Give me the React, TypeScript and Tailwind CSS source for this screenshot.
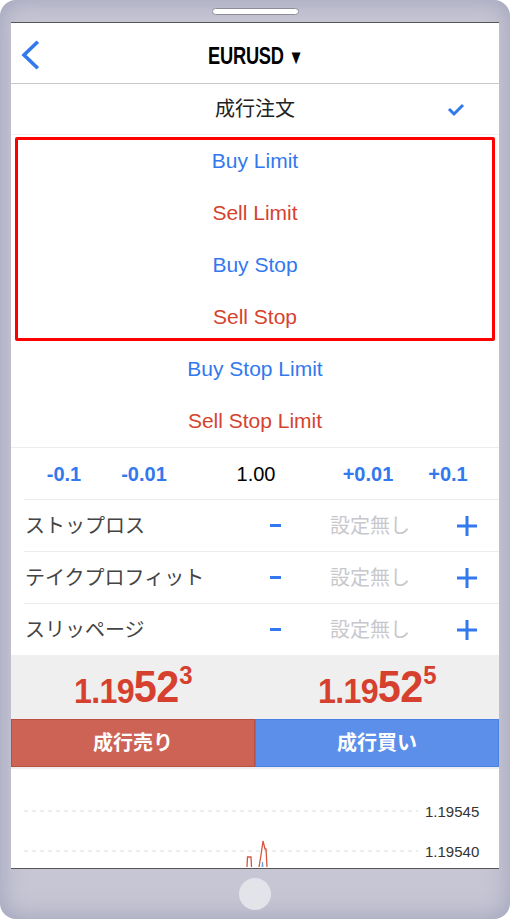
import React from 'react'

const BLUE = 'text-[#3278ee]'
const RED = 'text-[#d5432f]'

const orderTypes = [
  { label: 'Buy Limit', color: BLUE },
  { label: 'Sell Limit', color: RED },
  { label: 'Buy Stop', color: BLUE },
  { label: 'Sell Stop', color: RED },
]

const stopRows = ['ストップロス', 'テイクプロフィット', 'スリッページ']

function Price({ big, sup }: { big: string; sup: string }) {
  return (
    <div className="flex-1 flex justify-center items-end pb-[10px]">
      <span className="inline-flex items-start scale-x-[0.92] text-[#d5412e] font-bold tracking-[-0.8px] leading-none">
        <span className="text-[35px] mt-[9px]">1.19</span>
        <span className="text-[45px]">{big}</span>
        <span className="text-[26px] ml-[1px] -mt-[2px]">{sup}</span>
      </span>
    </div>
  )
}

export default function App() {
  return (
    <div className="w-[510px] h-[919px] bg-white font-['Liberation_Sans','Noto_Sans_CJK_JP',sans-serif]">
      <div className="h-full rounded-[16px] bg-[#c6c6d4] shadow-[inset_0_0_26px_rgba(130,130,165,0.55)] flex flex-col px-[11px]">
        {/* speaker */}
        <div className="h-[22px] flex justify-center pt-[8px]">
          <div className="w-[87px] h-[7px] rounded-full bg-white border border-[#8d8d9c]" />
        </div>

        {/* screen */}
        <div className="h-[847px] bg-white border-y border-[#555] flex flex-col">
          {/* header */}
          <div className="h-[61px] border-b border-[#c9c9cc] flex items-center relative">
            <svg className="absolute left-[10px] top-[17px]" width="20" height="30" viewBox="0 0 20 30">
              <polyline points="15.5,3 3,15 15.5,27" fill="none" stroke="#3278ee" strokeWidth="3.6" strokeLinecap="square" />
            </svg>
            <div className="flex-1 flex justify-center items-center pl-[2px] pt-[5px]">
              <span className="inline-block scale-x-[0.76] text-[24px] font-bold text-black tracking-[-0.3px]">
                EURUSD <span className="text-[20px]">▼</span>
              </span>
            </div>
          </div>

          {/* market order row */}
          <div className="h-[51px] border-b border-[#f0f0f0] flex items-center relative">
            <div className="flex-1 text-center text-[20px] text-[#222]">成行注文</div>
            <svg className="absolute left-[436px] top-[19px]" width="18" height="14" viewBox="0 0 18 14">
              <polyline points="2,6 7,11 16,2" fill="none" stroke="#3278ee" strokeWidth="3" />
            </svg>
          </div>

          {/* order types */}
          <div className="relative">
            {orderTypes.map((o) => (
              <div key={o.label} className={`h-[52px] flex items-center justify-center text-[21px] ${o.color}`}>
                {o.label}
              </div>
            ))}
            <div className="absolute left-[4px] right-[4px] top-[2px] h-[204px] border-[3px] border-[#ff0000] rounded-[2px]" />
          </div>
          <div className={`h-[52px] flex items-center justify-center text-[21px] ${BLUE}`}>Buy Stop Limit</div>
          <div className={`h-[52px] flex items-center justify-center text-[21px] ${RED}`}>Sell Stop Limit</div>

          {/* lot row */}
          <div className="border-t border-[#ececec]">
            <div className="h-[51px] flex items-center pl-[13px] text-[20px]">
              <div className={`w-[80px] text-center font-semibold ${BLUE}`}>-0.1</div>
              <div className={`w-[80px] text-center font-semibold ${BLUE}`}>-0.01</div>
              <div className="w-[144px] text-center text-black">1.00</div>
              <div className={`w-[80px] text-center font-semibold ${BLUE}`}>+0.01</div>
              <div className={`w-[80px] text-center font-semibold ${BLUE}`}>+0.1</div>
            </div>
          </div>

          {/* stops */}
          {stopRows.map((label) => (
            <div key={label} className="pl-[13px]">
              <div className="h-[52px] border-t border-[#ececec] flex items-center">
                <div className="w-[231px] pl-[1px] text-[20px] text-[#444]">{label}</div>
                <div className="w-[40px] flex justify-center">
                  <div className="w-[11px] h-[3px] bg-[#3278ee]" />
                </div>
                <div className="w-[150px] text-center text-[20px] text-[#c8c8cc]">設定無し</div>
                <div className="w-[44px] flex justify-center">
                  <svg width="20" height="20" viewBox="0 0 20 20">
                    <path d="M10 0v20M0 10h20" stroke="#3278ee" strokeWidth="3" />
                  </svg>
                </div>
              </div>
            </div>
          ))}

          {/* prices */}
          <div className="h-[64px] bg-[#efefef] flex">
            <Price big="52" sup="3" />
            <Price big="52" sup="5" />
          </div>

          {/* buttons */}
          <div className="h-[48px] flex">
            <div className="flex-1 bg-[#cd6355] border border-[#b8503f] flex items-center justify-center text-white text-[20px] font-bold">
              成行売り
            </div>
            <div className="flex-1 bg-[#5b8fe9] border border-[#4a80e2] flex items-center justify-center text-white text-[20px] font-bold">
              成行買い
            </div>
          </div>

          {/* chart */}
          <div className="flex-1 border-t-2 border-[#eeeeee] relative overflow-hidden">
            <svg className="absolute left-0 top-0" width="488" height="98" viewBox="0 0 488 98">
              <line x1="13" y1="42" x2="407" y2="42" stroke="#dcdcdc" strokeDasharray="4 4" />
              <line x1="13" y1="82" x2="407" y2="82" stroke="#dcdcdc" strokeDasharray="4 4" />
              <polyline points="236,98 236.5,88 240,88 240.5,98" fill="none" stroke="#d5553f" strokeWidth="1.3" />
              <polyline points="248,98 250,86 252,72 254,80 255,80 256,98" fill="none" stroke="#d5553f" strokeWidth="1.3" />
              <polyline points="251,98 251.5,93 252,98" fill="none" stroke="#6b9ae8" strokeWidth="1" />
            </svg>
            <div className="absolute left-[414px] top-[32px] text-[15px] text-[#333]">1.19545</div>
            <div className="absolute left-[414px] top-[72px] text-[15px] text-[#333]">1.19540</div>
          </div>
        </div>

        {/* home */}
        <div className="flex-1 flex items-center justify-center">
          <div className="w-[32px] h-[32px] rounded-full bg-[#e3e3ea]" />
        </div>
      </div>
    </div>
  )
}
